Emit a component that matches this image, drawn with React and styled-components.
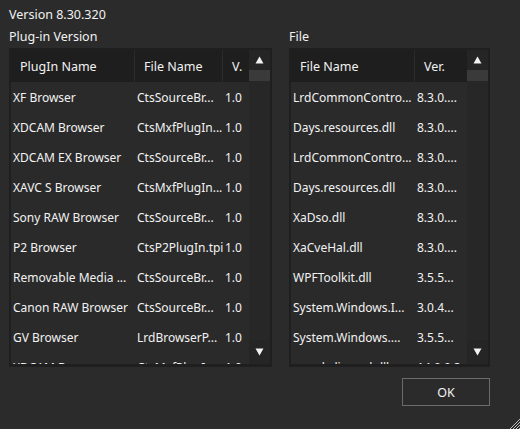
import React from "react";
import styled, { createGlobalStyle } from "styled-components";

const Global = createGlobalStyle`
  html, body { margin: 0; padding: 0; background: #2b2b2b; }
  body { font-family: "Noto Sans", "Open Sans", sans-serif; font-size: 12.5px; color: #f2f2f2; }
`;

const Window = styled.div`
  position: relative;
  width: 520px;
  height: 429px;
  box-sizing: border-box;
  padding: 6px 30px 0 9px;
  background: #2b2b2b;
  overflow: hidden;
`;

const Label = styled.div`
  height: 20px;
  line-height: 18px;
  white-space: nowrap;
`;

const Columns = styled.div`
  display: grid;
  grid-template-columns: 263px 201px;
  column-gap: 17px;
  margin-top: 2px;
`;

const Section = styled.div`
  display: flex;
  flex-direction: column;
`;

const Panel = styled.div`
  display: flex;
  height: 319px;
  border: 2px solid #1f1f1f;
  border-bottom-width: 3px;
  box-sizing: border-box;
  background: #2a2a2a;
  overflow: hidden;
`;

const Table = styled.div`
  flex: 1;
  min-width: 0;
  overflow: hidden;
  font-size: 12px;
`;

const Row = styled.div`
  display: grid;
  grid-template-columns: ${(p) => p.$cols};
  height: ${(p) => (p.$head ? 32 : 30)}px;
  background: ${(p) => (p.$head ? "#1e1e1e" : "transparent")};
`;

const Cell = styled.div`
  display: flex;
  align-items: center;
  padding-left: ${(p) => (p.$head ? 9 : 2)}px;
  white-space: nowrap;
  overflow: hidden;
  border-right: ${(p) => (p.$divider ? "1px solid #2c2c2c" : "none")};
  padding-top: ${(p) => (p.$head ? 0 : 1)}px;
  font-size: ${(p) => (p.$head ? 12.5 : 12)}px;
`;

const Scrollbar = styled.div`
  width: 21px;
  display: flex;
  flex-direction: column;
  background: #262626;
`;

const Arrow = styled.div`
  height: ${(p) => p.$h}px;
  display: flex;
  align-items: center;
  justify-content: center;
  background: #252525;
`;

const Thumb = styled.div`
  height: 11px;
  background: #3a3a3a;
`;

const Track = styled.div`
  flex: 1;
  background: #272727;
`;

const Footer = styled.div`
  display: flex;
  justify-content: flex-end;
  margin-top: 11px;
`;

const OkButton = styled.button`
  width: 88px;
  height: 28px;
  border: 1px solid #6b6b6b;
  background: #2b2b2b;
  color: #f2f2f2;
  font-family: inherit;
  font-size: 12.5px;
  padding: 0;
`;

const Grip = styled.svg`
  position: absolute;
  right: 0;
  bottom: 0;
`;

const Tri = ({ up }) => (
  <svg width="9" height="8" viewBox="0 0 9 8">
    <polygon points={up ? "4.5,0.5 8.5,7.5 0.5,7.5" : "0.5,0.5 8.5,0.5 4.5,7.5"} fill="#f2f2f2" />
  </svg>
);

const ScrollBar = () => (
  <Scrollbar>
    <Arrow $h={20}><Tri up /></Arrow>
    <Thumb />
    <Track />
    <Arrow $h={24}><Tri /></Arrow>
  </Scrollbar>
);

const plugins = [
  ["XF Browser", "CtsSourceBr...", "1.0"],
  ["XDCAM Browser", "CtsMxfPlugIn...", "1.0"],
  ["XDCAM EX Browser", "CtsSourceBr...", "1.0"],
  ["XAVC S Browser", "CtsMxfPlugIn...", "1.0"],
  ["Sony RAW Browser", "CtsSourceBr...", "1.0"],
  ["P2 Browser", "CtsP2PlugIn.tpi", "1.0"],
  ["Removable Media ...", "CtsSourceBr...", "1.0"],
  ["Canon RAW Browser", "CtsSourceBr...", "1.0"],
  ["GV Browser", "LrdBrowserP...", "1.0"],
  ["XDCAM Browser", "CtsMxfPlugIn...", "1.0"],
];

const files = [
  ["LrdCommonContro...", "8.3.0...."],
  ["Days.resources.dll", "8.3.0...."],
  ["LrdCommonContro...", "8.3.0...."],
  ["Days.resources.dll", "8.3.0...."],
  ["XaDso.dll", "8.3.0...."],
  ["XaCveHal.dll", "8.3.0...."],
  ["WPFToolkit.dll", "3.5.5..."],
  ["System.Windows.I...", "3.0.4..."],
  ["System.Windows....", "3.5.5..."],
  ["mxml_dispmd.dll", "14.0.0.3"],
];

const LCOLS = "124px 88px 1fr";
const RCOLS = "124px 1fr";

export default function App() {
  return (
    <>
      <Global />
      <Window>
        <Label>Version 8.30.320</Label>
        <Columns>
          <Section>
            <Label>Plug-in Version</Label>
            <Panel>
              <Table>
                <Row $head $cols={LCOLS}>
                  <Cell $head $divider>PlugIn Name</Cell>
                  <Cell $head $divider>File Name</Cell>
                  <Cell $head>V.</Cell>
                </Row>
                {plugins.map((r, i) => (
                  <Row key={i} $cols={LCOLS}>
                    <Cell>{r[0]}</Cell>
                    <Cell>{r[1]}</Cell>
                    <Cell>{r[2]}</Cell>
                  </Row>
                ))}
              </Table>
              <ScrollBar />
            </Panel>
          </Section>
          <Section>
            <Label>File</Label>
            <Panel>
              <Table>
                <Row $head $cols={RCOLS}>
                  <Cell $head $divider>File Name</Cell>
                  <Cell $head>Ver.</Cell>
                </Row>
                {files.map((r, i) => (
                  <Row key={i} $cols={RCOLS}>
                    <Cell>{r[0]}</Cell>
                    <Cell>{r[1]}</Cell>
                  </Row>
                ))}
              </Table>
              <ScrollBar />
            </Panel>
          </Section>
        </Columns>
        <Footer>
          <OkButton>OK</OkButton>
        </Footer>
        <Grip width="12" height="12" viewBox="0 0 12 12">
          <line x1="12" y1="2" x2="2" y2="12" stroke="#bdbdbd" strokeWidth="1" />
          <line x1="12" y1="5" x2="5" y2="12" stroke="#bdbdbd" strokeWidth="1" />
          <line x1="12" y1="8" x2="8" y2="12" stroke="#bdbdbd" strokeWidth="1" />
          <line x1="12" y1="11" x2="11" y2="12" stroke="#bdbdbd" strokeWidth="1" />
        </Grip>
      </Window>
    </>
  );
}
